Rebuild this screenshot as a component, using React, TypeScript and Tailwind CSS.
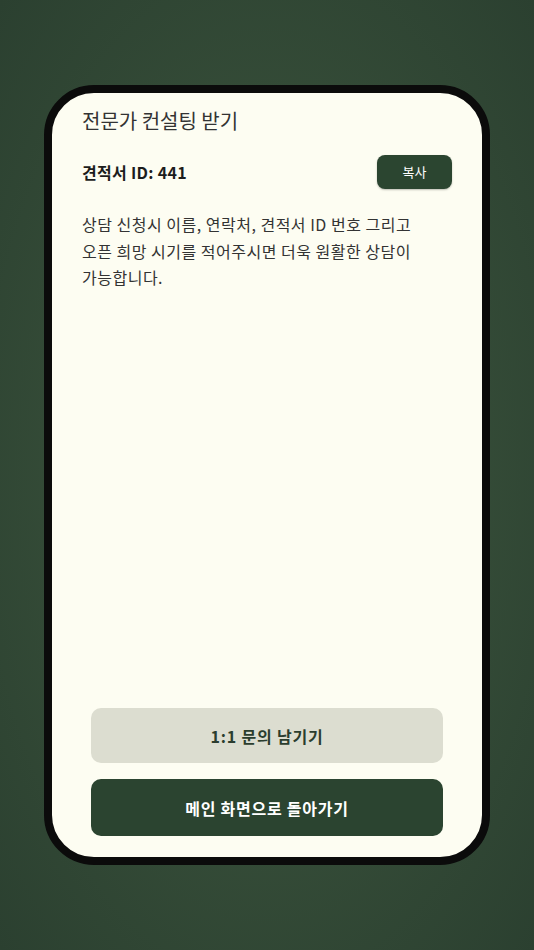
import React from 'react';

const FONT = { fontFamily: '"Noto Sans CJK KR", "Noto Sans", sans-serif' };

export default function App() {
  return (
    <div
      className="w-full h-[950px] flex items-center justify-center bg-[radial-gradient(ellipse_at_center,#3a533c_0%,#344b37_55%,#2b4030_100%)]"
      style={FONT}
    >
      {/* Phone frame */}
      <div className="w-[446px] h-[780px] rounded-[50px] border-8 border-[#0b0b0b] bg-[#fdfdf2] overflow-hidden flex flex-col">
        <div className="flex-1 flex flex-col px-[30px] pt-[14px]">
          <h1 className="text-[20px] leading-[28px] text-[#333333] font-normal">전문가 컨설팅 받기</h1>

          <div className="mt-[20px] flex items-center justify-between">
            <span className="text-[16px] tracking-[0.3px] font-bold text-[#1c1c1c]">견적서 ID: 441</span>
            <button className="w-[75px] h-[34px] rounded-[8px] bg-[#2b4530] text-white text-[13px] shadow-[0_1px_2px_rgba(0,0,0,0.25)]">
              복사
            </button>
          </div>

          <p className="mt-[22px] text-[16px] tracking-[0.5px] leading-[26.5px] text-[#333333]">
            상담 신청시 이름, 연락처, 견적서 ID 번호 그리고
            <br />
            오픈 희망 시기를 적어주시면 더욱 원활한 상담이
            <br />
            가능합니다.
          </p>
        </div>

        <div className="px-[39px] pb-[21px] flex flex-col gap-4">
          <button className="h-[55px] rounded-[10px] bg-[#dcddd0] text-[#2b3d2e] text-[16px] tracking-[0.8px] font-bold">
            1:1 문의 남기기
          </button>
          <button className="h-[57px] rounded-[10px] bg-[#2b4430] text-white text-[16px] tracking-[0.75px] font-bold">
            메인 화면으로 돌아가기
          </button>
        </div>
      </div>
    </div>
  );
}
